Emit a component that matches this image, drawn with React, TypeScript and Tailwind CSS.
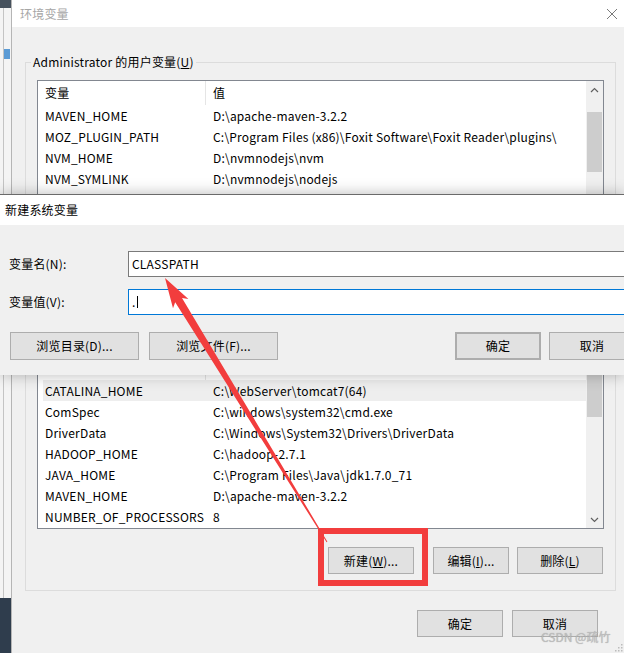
import React from 'react';

type Item = { name: string; value: string; hl?: boolean };

const userVars: Item[] = [
  { name: 'MAVEN_HOME', value: 'D:\\apache-maven-3.2.2' },
  { name: 'MOZ_PLUGIN_PATH', value: 'C:\\Program Files (x86)\\Foxit Software\\Foxit Reader\\plugins\\' },
  { name: 'NVM_HOME', value: 'D:\\nvmnodejs\\nvm' },
  { name: 'NVM_SYMLINK', value: 'D:\\nvmnodejs\\nodejs' },
];

const sysVars: Item[] = [
  { name: 'CATALINA_HOME', value: 'C:\\WebServer\\tomcat7(64)', hl: true },
  { name: 'ComSpec', value: 'C:\\windows\\system32\\cmd.exe' },
  { name: 'DriverData', value: 'C:\\Windows\\System32\\Drivers\\DriverData' },
  { name: 'HADOOP_HOME', value: 'C:\\hadoop-2.7.1' },
  { name: 'JAVA_HOME', value: 'C:\\Program Files\\Java\\jdk1.7.0_71' },
  { name: 'MAVEN_HOME', value: 'D:\\apache-maven-3.2.2' },
  { name: 'NUMBER_OF_PROCESSORS', value: '8' },
];

function Chevron({ up }: { up?: boolean }) {
  return (
    <svg width="9" height="6" viewBox="0 0 9 6">
      <path
        d={up ? 'M1 5 L4.5 1.5 L8 5' : 'M1 1 L4.5 4.5 L8 1'}
        fill="none"
        stroke="#606060"
        strokeWidth="1.2"
      />
    </svg>
  );
}

function Row({ item }: { item: Item }) {
  return (
    <div className={`ml-[5px] flex h-[21px] items-center whitespace-nowrap ${item.hl ? 'bg-[#eeeeee]' : ''}`}>
      <span className="w-[163px] shrink-0 pl-[2px]">{item.name}</span>
      <span className="pl-[7px]">{item.value}</span>
    </div>
  );
}

function Header({ labels = true }: { labels?: boolean }) {
  return (
    <div className="flex h-[24px] items-center">
      <span className="flex h-full w-[168px] shrink-0 items-center border-r border-[#e5e5e5] pl-[7px]">
        {labels ? '变量' : ''}
      </span>
      <span className="pl-[7px]">{labels ? '值' : ''}</span>
    </div>
  );
}

function Btn({ children, className = '' }: { children: React.ReactNode; className?: string }) {
  return (
    <div
      className={`flex h-[27px] shrink-0 items-center justify-center whitespace-nowrap border border-[#adadad] bg-[#e1e1e1] text-black ${className}`}
    >
      {children}
    </div>
  );
}

export default function App() {
  return (
    <div className="relative flex h-[653px] w-[624px] overflow-hidden bg-[#f0f0f0] font-['Noto_Sans_CJK_SC','Noto_Sans',sans-serif] text-[12px] leading-[18px] tracking-[0.2px] text-black">
      {/* desktop strip on the left */}
      <div className="flex w-[12px] shrink-0 flex-col border-r border-[#b5b5b5]">
        <div className="h-[8px] bg-[#46515d]" />
        <div className="flex flex-1 flex-col bg-[#f4f4f4] pl-[3px]">
          <div className="flex flex-1 flex-col border-l border-[#c4c4c4]">
            <div className="mt-[41px] h-[10px] w-[6px] bg-[#5b9bd5]" />
          </div>
        </div>
        <div className="h-[55px] bg-[#2f3d4d]" />
      </div>

      {/* main window */}
      <div className="flex flex-1 flex-col">
        <div className="flex h-[27px] shrink-0 items-center justify-between bg-white pl-[8px] pr-[6px]">
          <span className="text-[#a6a6a6]">环境变量</span>
          <svg width="12" height="12" viewBox="0 0 12 12" className="mb-[-1px]">
            <path d="M1 1 L11 11 M11 1 L1 11" stroke="#7a7a7a" strokeWidth="1" />
          </svg>
        </div>

        <div className="flex flex-1 flex-col pl-[13px] pr-[8px]">
          <fieldset className="mt-[26px] h-[247px] border border-[#dcdcdc] px-[11px] pt-[9px]">
            <legend className="-ml-[6px] px-[2px] leading-[18px]">
              Administrator 的用户变量(<span className="underline">U</span>)
            </legend>
            <div className="flex h-[180px] border border-[#828790] bg-white">
              <div className="flex-1 overflow-hidden">
                <Header />
                {userVars.map((v) => (
                  <Row key={v.name} item={v} />
                ))}
              </div>
              <div className="flex w-[17px] shrink-0 flex-col bg-[#f0f0f0]">
                <div className="flex h-[17px] items-center justify-center">
                  <Chevron up />
                </div>
                <div className="h-[14px]" />
                <div className="mx-[1px] h-[60px] bg-[#cdcdcd]" />
              </div>
            </div>
          </fieldset>

          {/* system variables group; its caption and header sit under the dialog */}
          <fieldset className="mt-[28px] border border-[#dcdcdc] px-[11px] pb-[16px] pt-[9px]">
            <legend className="-ml-[6px] h-[18px] w-[72px] px-[2px]" />
            <div className="flex h-[174px] border border-[#828790] bg-white">
              <div className="flex-1 overflow-hidden">
                <Header labels={false} />
                {sysVars.map((v) => (
                  <Row key={v.name + v.value} item={v} />
                ))}
              </div>
              <div className="flex w-[17px] shrink-0 flex-col bg-[#f0f0f0]">
                <div className="flex h-[17px] items-center justify-center">
                  <Chevron up />
                </div>
                <div className="mx-[1px] h-[44px] bg-[#cdcdcd]" />
                <div className="flex-1" />
                <div className="flex h-[17px] items-center justify-center">
                  <Chevron />
                </div>
              </div>
            </div>
            <div className="mt-[18px] flex justify-end pr-[1px]">
              <Btn className="w-[86px]">
                新建(<span className="underline">W</span>)...
              </Btn>
              <Btn className="ml-[19px] w-[76px]">
                编辑(<span className="underline">I</span>)...
              </Btn>
              <Btn className="ml-[8px] w-[86px]">
                删除(<span className="underline">L</span>)
              </Btn>
            </div>
          </fieldset>

          <div className="mt-[19px] flex justify-end gap-[9px] pr-[18px]">
            <Btn className="w-[86px]">确定</Btn>
            <Btn className="w-[86px]">取消</Btn>
          </div>
        </div>
      </div>

      {/* 新建系统变量 dialog on top */}
      <div className="absolute left-0 top-[194px] flex h-[181px] w-[624px] flex-col border-t border-[#6a6a6a] bg-[#f0f0f0] shadow-[0_0_14px_rgba(0,0,0,0.28)]">
        <div className="flex h-[30px] shrink-0 items-center bg-white pl-[5px]">新建系统变量</div>
        <div className="mt-[26px] flex h-[26px] items-center">
          <span className="w-[128px] shrink-0 pl-[9px]">变量名(N):</span>
          <div className="flex h-[26px] w-[520px] shrink-0 items-center border border-[#7a7a7a] bg-white pl-[3px]">
            CLASSPATH
          </div>
        </div>
        <div className="mt-[12px] flex h-[26px] items-center">
          <span className="w-[128px] shrink-0 pl-[9px]">变量值(V):</span>
          <div className="flex h-[26px] w-[520px] shrink-0 items-center border border-[#0078d7] bg-white pl-[3px]">
            <span>.</span>
            <span className="ml-[1px] h-[12px] w-[1px] bg-black" />
          </div>
        </div>
        <div className="mt-[17px] flex items-center">
          <Btn className="ml-[10px] h-[28px] w-[129px]">浏览目录(D)...</Btn>
          <Btn className="ml-[10px] h-[28px] w-[129px]">浏览文件(F)...</Btn>
          <Btn className="ml-[177px] h-[28px] w-[86px] border-2 border-[#0078d7]">确定</Btn>
          <Btn className="ml-[8px] h-[28px] w-[86px]">取消</Btn>
        </div>
      </div>

      {/* red annotation: box around 新建 and arrow to the name field */}
      <div className="absolute left-[318px] top-[528px] h-[58px] w-[110px] border-[6px] border-[#f23d3d]" />
      <svg className="pointer-events-none absolute left-0 top-0" width="624" height="653">
        <polygon
          points="165,278 188.4,298.9 182,298.1 327.4,541.7 326.6,542.3 175.2,302.3 173,308.3"
          fill="#f23d3d"
        />
      </svg>

      {/* watermark */}
      <div className="absolute left-[541px] top-[629px] text-[12px] leading-[16px] tracking-normal text-[#bdbdbd] [text-shadow:0_0_1px_rgba(0,0,0,0.25)]">
        CSDN @疏竹
      </div>

      {/* resize grip */}
      <svg className="absolute bottom-[1px] right-[1px]" width="10" height="10" viewBox="0 0 10 10">
        <rect x="8" y="2" width="1.5" height="1.5" fill="#bcbcbc" />
        <rect x="5" y="5" width="1.5" height="1.5" fill="#bcbcbc" />
        <rect x="8" y="5" width="1.5" height="1.5" fill="#bcbcbc" />
        <rect x="2" y="8" width="1.5" height="1.5" fill="#bcbcbc" />
        <rect x="5" y="8" width="1.5" height="1.5" fill="#bcbcbc" />
        <rect x="8" y="8" width="1.5" height="1.5" fill="#bcbcbc" />
      </svg>
    </div>
  );
}
